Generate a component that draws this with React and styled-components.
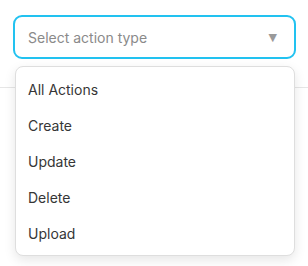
import React, { useState } from "react";
import styled, { createGlobalStyle } from "styled-components";

const GlobalStyle = createGlobalStyle`
  html, body, #root {
    height: 100%;
  }
  body {
    margin: 0;
    background: #ffffff;
    font-family: Inter, "Liberation Sans", sans-serif;
  }
`;

const options = ["All Actions", "Create", "Update", "Delete", "Upload"];

function App() {
  const [value, setValue] = useState("");

  return (
    <Page>
      <GlobalStyle />
      <FilterBar>
        <SelectWrap>
          <SelectBox>
            <Placeholder $filled={!!value}>{value || "Select action type"}</Placeholder>
            <Caret>▼</Caret>
          </SelectBox>
          <Menu>
            {options.map((opt) => (
              <Option key={opt} onClick={() => setValue(opt)}>
                {opt}
              </Option>
            ))}
          </Menu>
        </SelectWrap>
      </FilterBar>
    </Page>
  );
}

const Page = styled.div`
  min-height: 100%;
  background: #fff;
`;

const FilterBar = styled.div`
  padding: 15px 12px 28px 13px;
  border-bottom: 1px solid #e6e6e6;
`;

const SelectWrap = styled.div`
  position: relative;
`;

const SelectBox = styled.div`
  height: 44px;
  box-sizing: border-box;
  border: 2px solid #22c2f0;
  border-radius: 9px;
  display: flex;
  align-items: center;
  justify-content: space-between;
  padding: 0 17px 0 13px;
  background: #fff;
`;

const Placeholder = styled.span`
  font-size: 14px;
  color: ${(p) => (p.$filled ? "#333" : "#8a8a8a")};
`;

const Caret = styled.span`
  font-size: 11px;
  color: #9a9a9a;
  font-family: "DejaVu Sans", sans-serif;
`;

const Menu = styled.div`
  position: absolute;
  top: calc(100% + 7px);
  left: 2px;
  right: 1px;
  background: #fff;
  border: 1px solid #dedede;
  border-radius: 8px;
  box-shadow: 0 4px 12px rgba(0, 0, 0, 0.1);
  padding: 4px 0;
  z-index: 10;
`;

const Option = styled.div`
  height: 36px;
  display: flex;
  align-items: center;
  padding: 0 12px;
  font-size: 14px;
  color: #363636;
  cursor: pointer;
`;

export default App;
